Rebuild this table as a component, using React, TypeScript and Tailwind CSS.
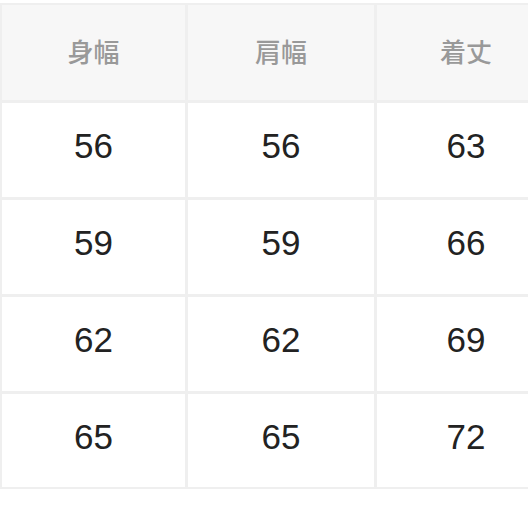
const headers = ['身幅', '肩幅', '着丈']
const rows = [
  ['56', '56', '63'],
  ['59', '59', '66'],
  ['62', '62', '69'],
  ['65', '65', '72'],
]

export default function App() {
  return (
    <div className="w-[528px] h-[528px] overflow-hidden bg-white pt-[3px]">
      <div className="grid w-max grid-cols-[183px_186px_178px] grid-rows-[95px_94px_94px_94px_93px] gap-[3px] bg-[#efefef] p-[2px]">
        {headers.map((h) => (
          <div
            key={h}
            className="flex items-center justify-center bg-[#f7f7f7] pb-[4px] text-[26px] font-medium text-[#999999]"
            style={{ fontFamily: '"Noto Sans CJK JP", sans-serif' }}
          >
            {h}
          </div>
        ))}
        {rows.map((r, i) =>
          r.map((v, j) => (
            <div
              key={i + '-' + j}
              className="flex items-center justify-center bg-white pb-[7px] text-[35px] text-[#222222]"
              style={{ fontFamily: '"Liberation Sans", Arial, sans-serif' }}
            >
              {v}
            </div>
          ))
        )}
      </div>
    </div>
  )
}
